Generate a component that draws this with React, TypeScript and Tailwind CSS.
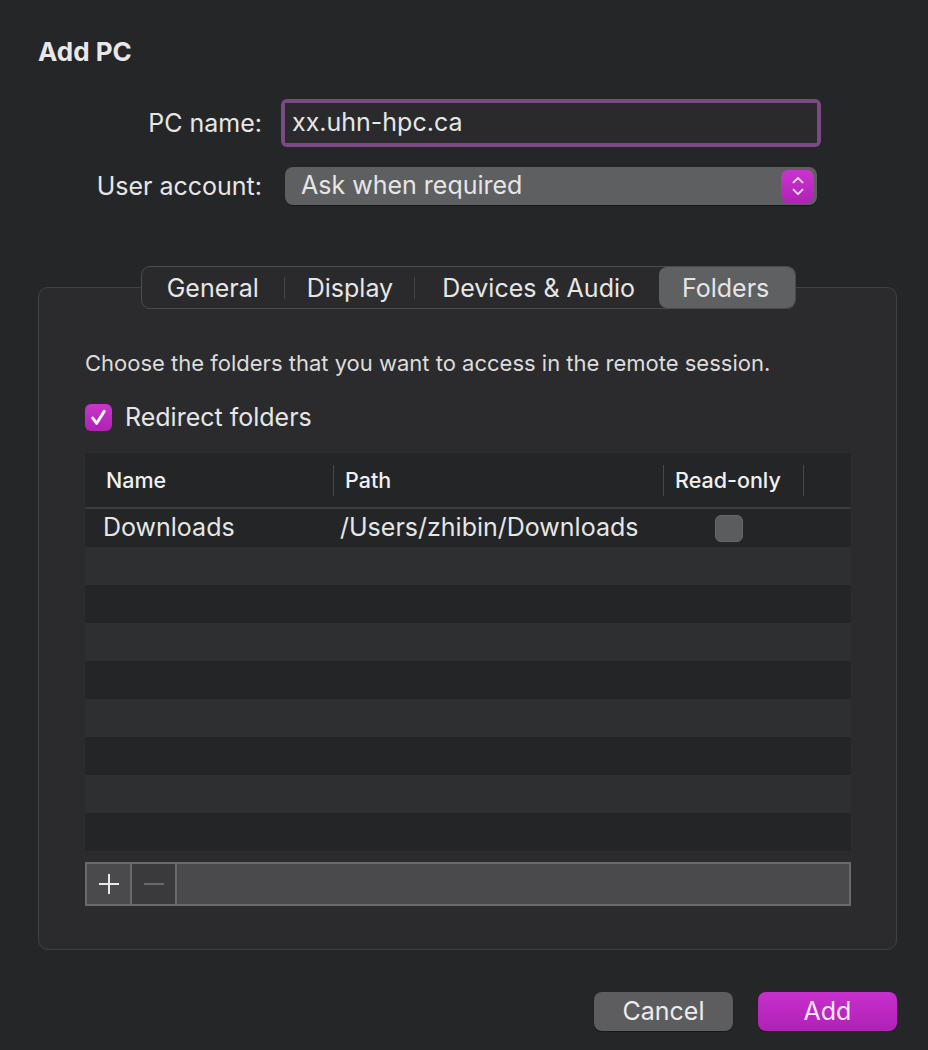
const rows = Array.from({ length: 9 }, (_, i) => i);

function Check() {
  return (
    <svg viewBox="0 0 20 20" className="w-[21px] h-[21px]">
      <path d="M4.5 10.5 L8.3 15.5 L15.5 4" fill="none" stroke="#fff" strokeWidth="2.8" strokeLinecap="round" strokeLinejoin="round" />
    </svg>
  );
}

function Stepper() {
  return (
    <svg viewBox="0 0 20 28" className="w-[18px] h-[26px]">
      <path d="M5 10 L10 5 L15 10" fill="none" stroke="#f6d8f6" strokeWidth="2.2" strokeLinecap="round" strokeLinejoin="round" />
      <path d="M5 18 L10 23 L15 18" fill="none" stroke="#f6d8f6" strokeWidth="2.2" strokeLinecap="round" strokeLinejoin="round" />
    </svg>
  );
}

export default function App() {
  return (
    <div className="w-[928px] h-[1050px] bg-[#252628] text-[#e6e6e6] overflow-hidden" style={{ fontFamily: 'Inter, "Noto Sans", sans-serif' }}>
      <h1 className="pt-[36px] pl-[38px] text-[26px] font-bold leading-[32px] text-[#e8e8e8]">Add PC</h1>

      {/* fields */}
      <div className="mt-[31px] flex flex-col gap-[20px]">
        <div className="flex items-center">
          <span className="w-[262px] text-right text-[25px] leading-[30px]">PC name:</span>
          <div className="ml-[19px] w-[540px] h-[48px] rounded-[6px] bg-[#7a4a82] p-[4px]">
            <div className="h-full bg-[#2a2a2c] flex items-center pl-[7px] text-[25px]">xx.uhn-hpc.ca</div>
          </div>
        </div>
        <div className="flex items-center">
          <span className="w-[262px] text-right text-[25px] leading-[30px]">User account:</span>
          <div className="ml-[23px] w-[532px] h-[38px] rounded-[8px] bg-[#5e5f61] flex items-center justify-between pl-[16px] pr-[3px] shadow-[0_1px_1px_rgba(0,0,0,0.4)]">
            <span className="text-[25px]">Ask when required</span>
            <div className="w-[33px] h-[33px] rounded-[7px] bg-gradient-to-b from-[#c935cc] to-[#b021b6] flex items-center justify-center">
              <Stepper />
            </div>
          </div>
        </div>
      </div>

      {/* tab box */}
      <div className="mt-[82px] ml-[38px] w-[859px] h-[663px] rounded-[10px] border border-[#404143] bg-[#2b2b2d] flex flex-col">
        <div className="-mt-[22px] self-center flex items-center h-[43px] rounded-[9px] border border-[#4a4b4d] bg-[#2a2a2c] text-[25px] leading-[30px] ml-[2px]">
          <span className="pl-[25px] pr-[25px]">General</span>
          <span className="w-[1px] h-[22px] bg-[#444547]" />
          <span className="pl-[22px] pr-[21px]">Display</span>
          <span className="w-[1px] h-[22px] bg-[#444547]" />
          <span className="pl-[27px] pr-[24px]">Devices &amp; Audio</span>
          <span className="h-full pl-[23px] pr-[26px] rounded-[8px] bg-[#5f6062] flex items-center">Folders</span>
        </div>

        <div className="pl-[46px] pr-[45px]">
          <p className="mt-[40px] text-[22px] leading-[28px] text-[#dcdcdc]">Choose the folders that you want to access in the remote session.</p>

          <label className="mt-[25px] flex items-center gap-[13px]">
            <span className="w-[27px] h-[27px] rounded-[6px] bg-gradient-to-b from-[#c935cc] to-[#b021b6] flex items-center justify-center">
              <Check />
            </span>
            <span className="text-[25px] leading-[30px]">Redirect folders</span>
          </label>

          {/* table */}
          <div className="mt-[21px] bg-[#232527]">
            <div className="h-[56px] flex items-center border-b-2 border-[#3b3d3f] text-[21.5px] font-medium text-[#f0f0f0]">
              <div className="w-[248px] pl-[21px]">Name</div>
              <div className="w-[1px] h-[31px] bg-[#46484a]" />
              <div className="w-[329px] pl-[11px]">Path</div>
              <div className="w-[1px] h-[31px] bg-[#46484a]" />
              <div className="w-[139px] pl-[11px]">Read-only</div>
              <div className="w-[1px] h-[31px] bg-[#46484a]" />
            </div>
            {rows.map(i => (
              <div key={i} className={`h-[38px] flex items-center text-[25px] ${i % 2 === 0 ? 'bg-[#232527]' : 'bg-[#2d2f31]'}`}>
                {i === 0 && (
                  <>
                    <div className="w-[248px] pl-[18px]">Downloads</div>
                    <div className="w-[330px] pl-[7px]">/Users/zhibin/Downloads</div>
                    <div className="pl-[52px]">
                      <div className="w-[28px] h-[27px] rounded-[6px] bg-[#5b5c5e] border border-[#666769]" />
                    </div>
                  </>
                )}
              </div>
            ))}
          </div>

          {/* +/- bar */}
          <div className="mt-[11px] h-[44px] flex border-2 border-[#6a6a6c] bg-[#4a4a4c]">
            <div className="w-[45px] flex items-center justify-center border-r-2 border-[#6a6a6c]">
              <svg viewBox="0 0 24 24" className="w-[24px] h-[24px]">
                <path d="M12 2 V22 M2 12 H22" stroke="#e8e8e8" strokeWidth="2" />
              </svg>
            </div>
            <div className="w-[45px] flex items-center justify-center border-r-2 border-[#6a6a6c] bg-[#3a3a3c]">
              <svg viewBox="0 0 24 24" className="w-[22px] h-[22px]">
                <path d="M1 12 H23" stroke="#6e6e70" strokeWidth="2" />
              </svg>
            </div>
            <div className="flex-1" />
          </div>
        </div>
      </div>

      {/* buttons */}
      <div className="mt-[42px] pr-[31px] flex justify-end gap-[25px]">
        <button className="w-[139px] h-[39px] rounded-[8px] bg-[#5d5d5f] text-[25px] text-[#ececec] shadow-[0_1px_1px_rgba(0,0,0,0.4)]">Cancel</button>
        <button className="w-[139px] h-[39px] rounded-[8px] bg-gradient-to-b from-[#c72fcc] to-[#b021b6] text-[25px] text-[#fbe6fb] shadow-[0_1px_1px_rgba(0,0,0,0.4)]">Add</button>
      </div>
    </div>
  );
}
